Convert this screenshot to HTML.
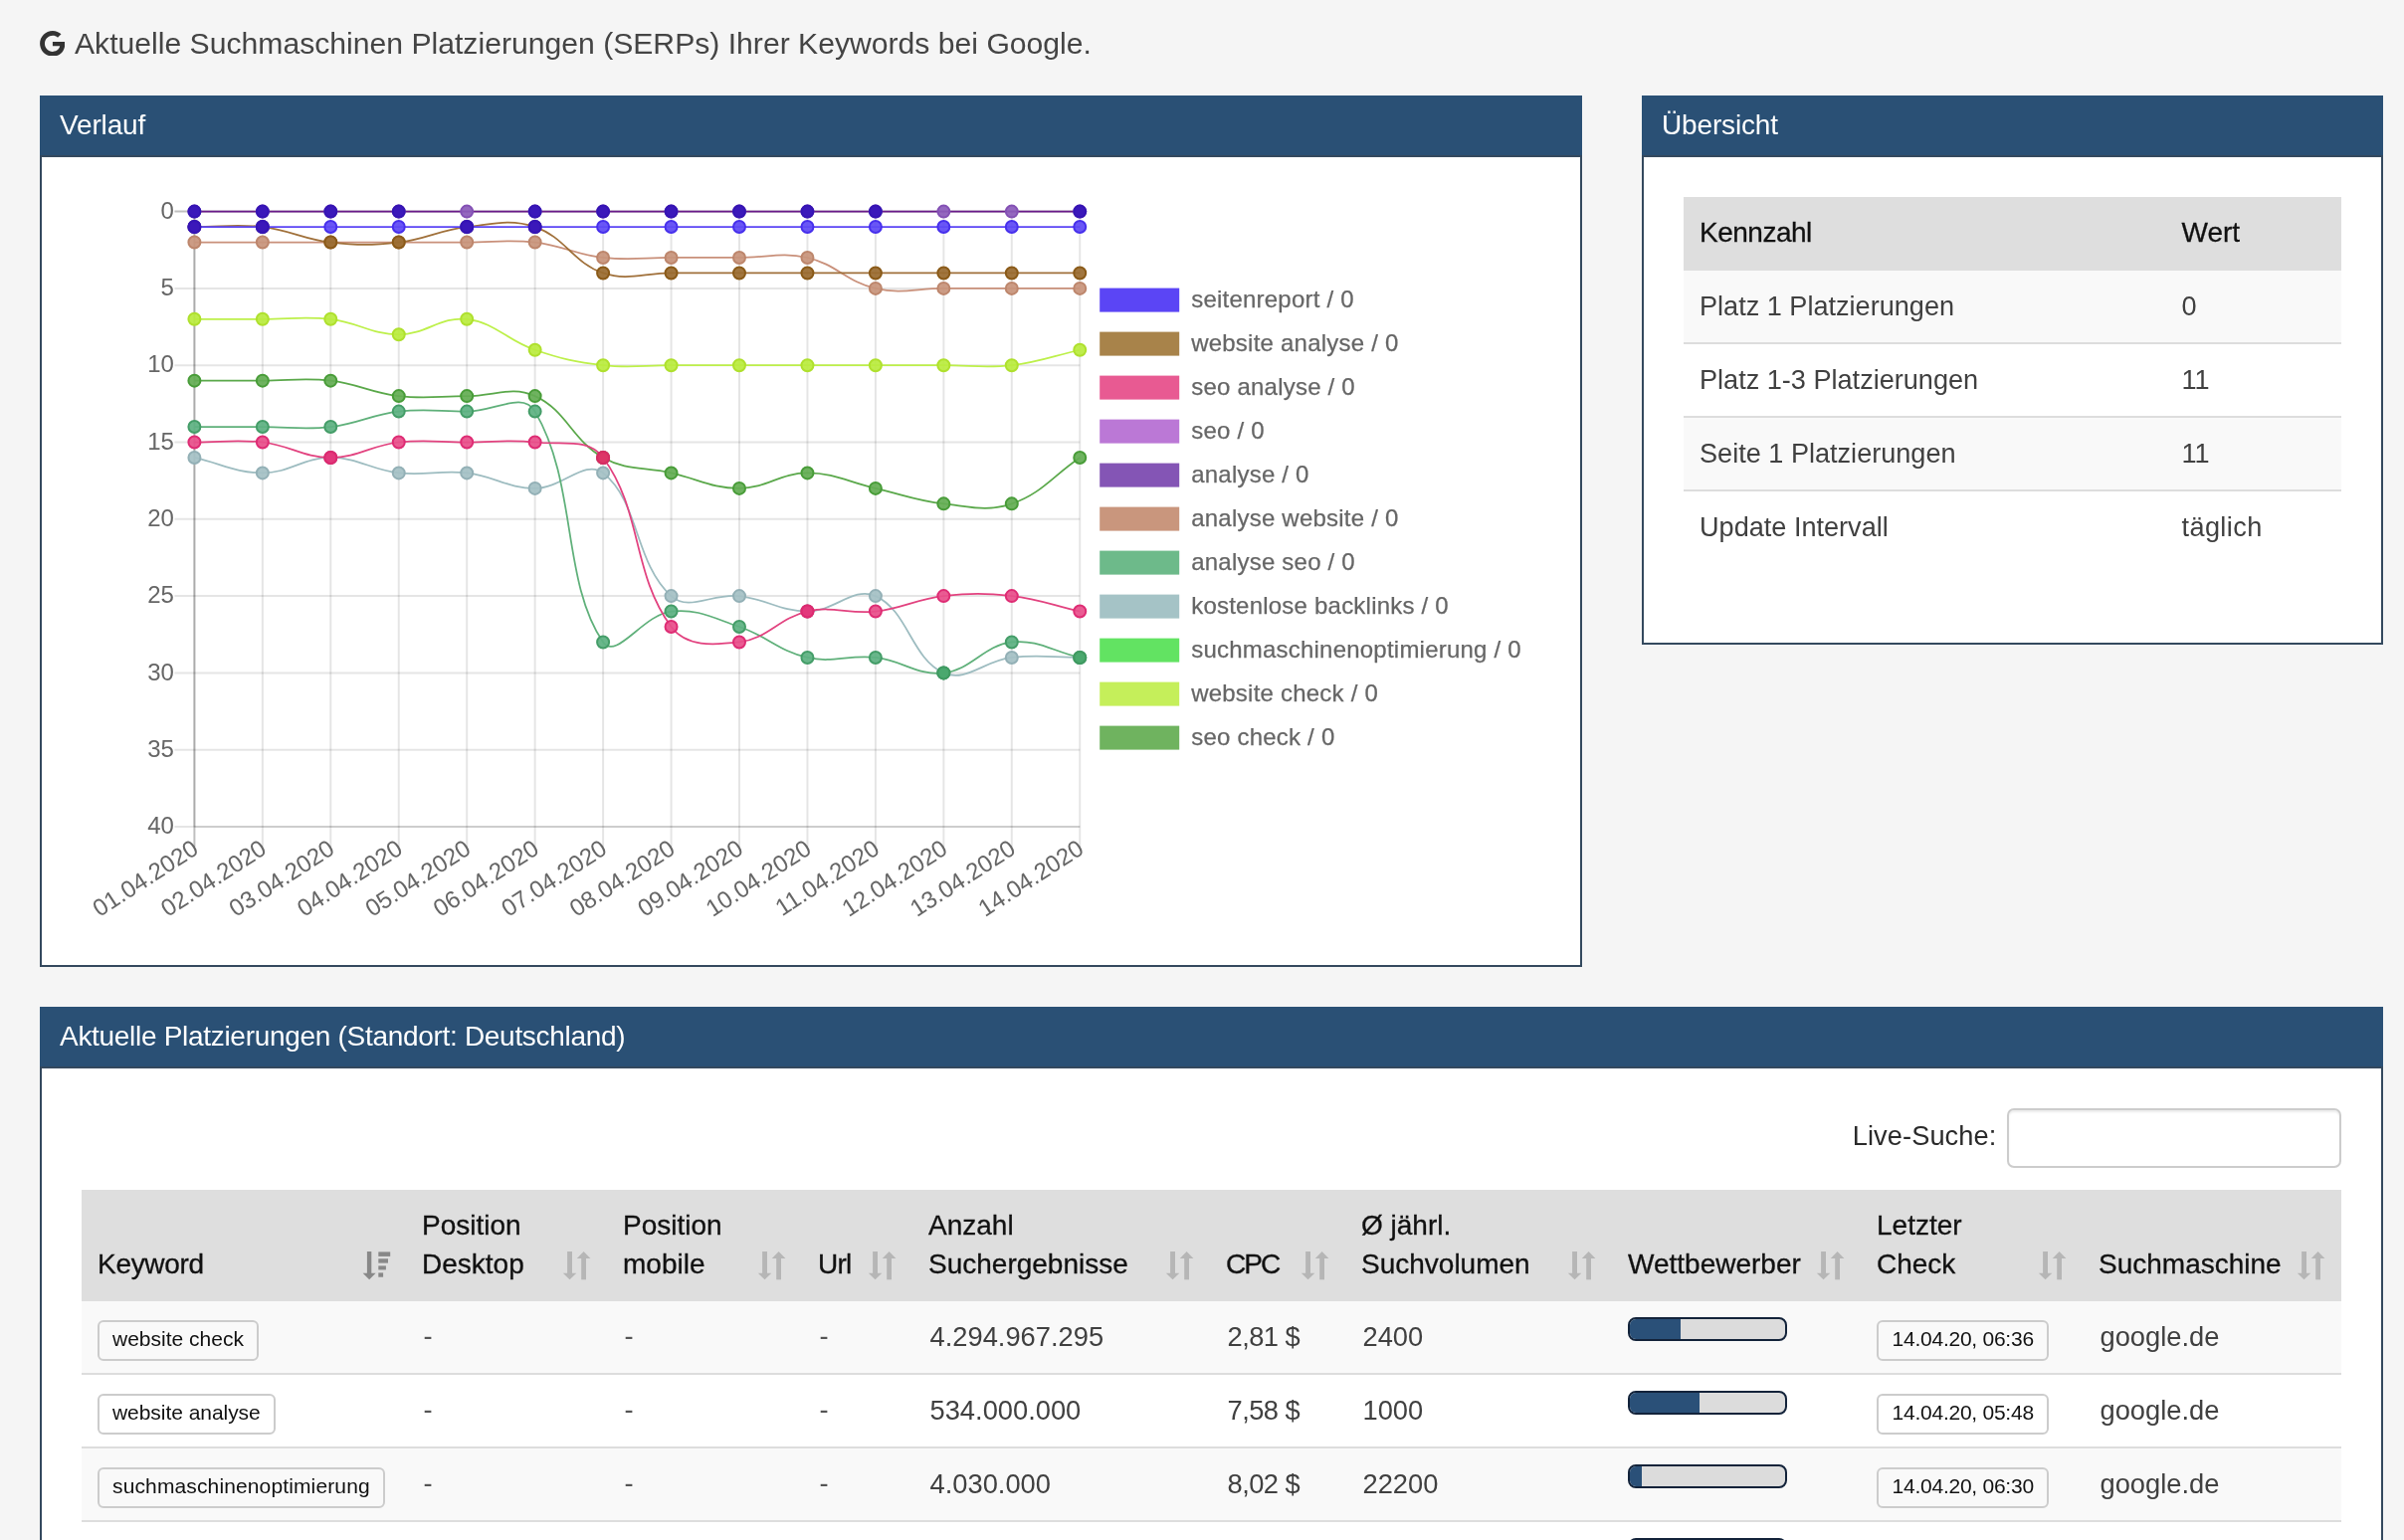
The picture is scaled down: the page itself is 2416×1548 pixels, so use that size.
<!DOCTYPE html>
<html lang="de"><head><meta charset="utf-8"><title>SERPs</title>
<style>
*{box-sizing:border-box}
html,body{margin:0;padding:0}
body{width:2416px;height:1548px;overflow:hidden;background:#f5f5f5;font-family:"Liberation Sans",Arial,sans-serif;color:#404040;position:relative;font-size:28px}
#page{position:absolute;left:0;top:0;width:2416px;height:1548px;overflow:hidden;will-change:transform}
.title{position:absolute;left:75px;top:20.7px;font-size:30.15px;line-height:46px;white-space:nowrap;color:#444}
.gicon{position:absolute;left:40px;top:30.6px;width:25.4px;height:25.6px}
.panel{position:absolute;background:#fff;border:2px solid #34495e}
.ph{position:absolute;left:-2px;right:-2px;top:-2px;height:62px;background:#2a5075;border-bottom:2px solid #34495e;color:#fff;font-size:28px;line-height:60.2px;padding-left:20px;letter-spacing:-0.15px;white-space:nowrap}
.kt{position:absolute;left:40px;top:100px;width:661px}
.kr{position:relative;height:73.9px;border-bottom:2px solid #ddd;line-height:71.4px;white-space:nowrap;font-size:27.1px}
.kr.h{background:#dedede;color:#111;border-bottom:0;height:74.4px;line-height:71.8px;font-size:28px;-webkit-text-stroke:0.3px #111}
.kr.h .a{letter-spacing:-0.5px}
.kr.odd{background:#f9f9f9}
.kr.last{border-bottom:0}
.kr span{position:absolute;top:0}
.kr .a{left:16px} .kr .b{left:500.5px}
.ls{position:absolute;right:386.6px;top:97.5px;font-size:27.2px;letter-spacing:0.1px;color:#2a2a2a;line-height:59px;white-space:nowrap}
.inp{position:absolute;left:1975.4px;top:100.3px;width:335.6px;height:59.4px;box-shadow:inset 0 2px 2px rgba(0,0,0,.075);border:2px solid #ccc;border-radius:7px;background:#fff}
.tbl{position:absolute;left:40px;top:182px;width:2271px;height:420px}
.thead{position:absolute;left:0;top:0;width:100%;height:112px;background:#dedede}
.th{position:absolute;top:0;height:112px;color:#111;-webkit-text-stroke:0.3px #111;line-height:39.2px;white-space:nowrap}
.th .ht{position:absolute;left:16px;bottom:17.5px}
.th .si{position:absolute;right:14.8px;top:62px}
.th .si.act{right:14px}
.tr{position:absolute;left:0;width:100%;height:74px;border-bottom:2px solid #ddd;background:#fff}
.tr.odd{background:#f9f9f9}
.td{position:absolute;top:0;height:72px;line-height:72px;padding-left:17.5px;white-space:nowrap;font-size:27.3px}
.badge{display:inline-block;vertical-align:top;margin-top:19.4px;margin-left:-1.5px;height:40.6px;line-height:34.2px;padding:0 13px;border:2px solid #ccc;border-radius:6px;background:transparent;color:#111;font-size:21px}
.badge.d{letter-spacing:-0.25px;padding:0 13.6px}
.prog{display:inline-block;vertical-align:top;margin-top:16px;margin-left:-2px;width:160px;height:24px;border:2px solid #13233a;border-radius:8px;background:#dcdcdc;overflow:hidden}
.td.c1,.td.c2,.td.c3{top:-1.5px;color:#555}
.td.c5{letter-spacing:-0.55px}
.bar{display:block;height:100%;background:#2a5078}
</style></head>
<body>
<div id="page">
<svg class="gicon" viewBox="0 8 488 496"><path fill="#333" d="M488 261.8C488 403.3 391.1 504 248 504 110.8 504 0 393.2 0 256S110.8 8 248 8c66.8 0 123 24.5 166.3 64.9l-67.5 64.9C258.5 52.6 94.3 116.6 94.3 256c0 86.5 69.1 156.6 153.7 156.6 98.2 0 135-70.4 140.8-106.9H248v-85.3h236.1c2.3 12.7 3.9 24.9 3.9 41.4z"/></svg>
<div class="title">Aktuelle Suchmaschinen Platzierungen (SERPs) Ihrer Keywords bei Google.</div>

<div class="panel" style="left:40px;top:96px;width:1550px;height:876px"><div class="ph">Verlauf</div></div>
<svg class="chart" width="1506" height="770" viewBox="82 198 1506 770" style="position:absolute;left:82px;top:198px">
<g><line x1="195.40" y1="212.60" x2="195.40" y2="851.00" stroke="rgba(0,0,0,0.25)" stroke-width="2"/><line x1="263.85" y1="212.60" x2="263.85" y2="851.00" stroke="rgba(0,0,0,0.1)" stroke-width="2"/><line x1="332.30" y1="212.60" x2="332.30" y2="851.00" stroke="rgba(0,0,0,0.1)" stroke-width="2"/><line x1="400.75" y1="212.60" x2="400.75" y2="851.00" stroke="rgba(0,0,0,0.1)" stroke-width="2"/><line x1="469.20" y1="212.60" x2="469.20" y2="851.00" stroke="rgba(0,0,0,0.1)" stroke-width="2"/><line x1="537.65" y1="212.60" x2="537.65" y2="851.00" stroke="rgba(0,0,0,0.1)" stroke-width="2"/><line x1="606.10" y1="212.60" x2="606.10" y2="851.00" stroke="rgba(0,0,0,0.1)" stroke-width="2"/><line x1="674.55" y1="212.60" x2="674.55" y2="851.00" stroke="rgba(0,0,0,0.1)" stroke-width="2"/><line x1="743.00" y1="212.60" x2="743.00" y2="851.00" stroke="rgba(0,0,0,0.1)" stroke-width="2"/><line x1="811.45" y1="212.60" x2="811.45" y2="851.00" stroke="rgba(0,0,0,0.1)" stroke-width="2"/><line x1="879.90" y1="212.60" x2="879.90" y2="851.00" stroke="rgba(0,0,0,0.1)" stroke-width="2"/><line x1="948.35" y1="212.60" x2="948.35" y2="851.00" stroke="rgba(0,0,0,0.1)" stroke-width="2"/><line x1="1016.80" y1="212.60" x2="1016.80" y2="851.00" stroke="rgba(0,0,0,0.1)" stroke-width="2"/><line x1="1085.25" y1="212.60" x2="1085.25" y2="851.00" stroke="rgba(0,0,0,0.1)" stroke-width="2"/><line x1="175.40" y1="212.60" x2="1085.25" y2="212.60" stroke="rgba(0,0,0,0.25)" stroke-width="2"/><line x1="175.40" y1="289.90" x2="1085.25" y2="289.90" stroke="rgba(0,0,0,0.1)" stroke-width="2"/><line x1="175.40" y1="367.20" x2="1085.25" y2="367.20" stroke="rgba(0,0,0,0.1)" stroke-width="2"/><line x1="175.40" y1="444.50" x2="1085.25" y2="444.50" stroke="rgba(0,0,0,0.1)" stroke-width="2"/><line x1="175.40" y1="521.80" x2="1085.25" y2="521.80" stroke="rgba(0,0,0,0.1)" stroke-width="2"/><line x1="175.40" y1="599.10" x2="1085.25" y2="599.10" stroke="rgba(0,0,0,0.1)" stroke-width="2"/><line x1="175.40" y1="676.40" x2="1085.25" y2="676.40" stroke="rgba(0,0,0,0.1)" stroke-width="2"/><line x1="175.40" y1="753.70" x2="1085.25" y2="753.70" stroke="rgba(0,0,0,0.1)" stroke-width="2"/><line x1="175.40" y1="831.00" x2="1085.25" y2="831.00" stroke="rgba(0,0,0,0.1)" stroke-width="2"/><line x1="195.40" y1="212.60" x2="195.40" y2="831.00" stroke="rgba(0,0,0,0.1)" stroke-width="2"/><line x1="195.40" y1="831.00" x2="1085.25" y2="831.00" stroke="rgba(0,0,0,0.1)" stroke-width="2"/></g>
<g font-family="Liberation Sans, Arial, sans-serif" font-size="24" fill="#666"><text x="174.9" y="211.3" text-anchor="end" dominant-baseline="central">0</text><text x="174.9" y="288.6" text-anchor="end" dominant-baseline="central">5</text><text x="174.9" y="365.9" text-anchor="end" dominant-baseline="central">10</text><text x="174.9" y="443.2" text-anchor="end" dominant-baseline="central">15</text><text x="174.9" y="520.5" text-anchor="end" dominant-baseline="central">20</text><text x="174.9" y="597.8" text-anchor="end" dominant-baseline="central">25</text><text x="174.9" y="675.1" text-anchor="end" dominant-baseline="central">30</text><text x="174.9" y="752.4" text-anchor="end" dominant-baseline="central">35</text><text x="174.9" y="829.7" text-anchor="end" dominant-baseline="central">40</text><text transform="translate(196.20 849.80) rotate(-33)" text-anchor="end" dominant-baseline="central">01.04.2020</text><text transform="translate(264.65 849.80) rotate(-33)" text-anchor="end" dominant-baseline="central">02.04.2020</text><text transform="translate(333.10 849.80) rotate(-33)" text-anchor="end" dominant-baseline="central">03.04.2020</text><text transform="translate(401.55 849.80) rotate(-33)" text-anchor="end" dominant-baseline="central">04.04.2020</text><text transform="translate(470.00 849.80) rotate(-33)" text-anchor="end" dominant-baseline="central">05.04.2020</text><text transform="translate(538.45 849.80) rotate(-33)" text-anchor="end" dominant-baseline="central">06.04.2020</text><text transform="translate(606.90 849.80) rotate(-33)" text-anchor="end" dominant-baseline="central">07.04.2020</text><text transform="translate(675.35 849.80) rotate(-33)" text-anchor="end" dominant-baseline="central">08.04.2020</text><text transform="translate(743.80 849.80) rotate(-33)" text-anchor="end" dominant-baseline="central">09.04.2020</text><text transform="translate(812.25 849.80) rotate(-33)" text-anchor="end" dominant-baseline="central">10.04.2020</text><text transform="translate(880.70 849.80) rotate(-33)" text-anchor="end" dominant-baseline="central">11.04.2020</text><text transform="translate(949.15 849.80) rotate(-33)" text-anchor="end" dominant-baseline="central">12.04.2020</text><text transform="translate(1017.60 849.80) rotate(-33)" text-anchor="end" dominant-baseline="central">13.04.2020</text><text transform="translate(1086.05 849.80) rotate(-33)" text-anchor="end" dominant-baseline="central">14.04.2020</text></g>
<path d="M195.40 382.66 C222.78 382.66 236.47 382.66 263.85 382.66 C291.23 382.66 305.26 379.61 332.30 382.66 C360.02 385.79 373.03 394.99 400.75 398.12 C427.79 401.17 441.82 398.12 469.20 398.12 C496.58 398.12 514.32 387.58 537.65 398.12 C569.08 412.32 575.00 442.40 606.10 459.96 C629.76 473.32 647.17 469.24 674.55 475.42 C701.93 481.60 715.62 490.88 743.00 490.88 C770.38 490.88 784.07 475.42 811.45 475.42 C838.83 475.42 852.52 484.70 879.90 490.88 C907.28 497.06 920.63 503.21 948.35 506.34 C975.39 509.39 992.00 514.74 1016.80 506.34 C1046.76 496.19 1057.87 478.51 1085.25 459.96" fill="none" stroke="#5aa84a" stroke-width="1.75"/>
<g fill="#64ad54" stroke="#489c38" stroke-width="2" fill-opacity="0.93"><circle cx="195.40" cy="382.66" r="6"/><circle cx="263.85" cy="382.66" r="6"/><circle cx="332.30" cy="382.66" r="6"/><circle cx="400.75" cy="398.12" r="6"/><circle cx="469.20" cy="398.12" r="6"/><circle cx="537.65" cy="398.12" r="6"/><circle cx="606.10" cy="459.96" r="6"/><circle cx="674.55" cy="475.42" r="6"/><circle cx="743.00" cy="490.88" r="6"/><circle cx="811.45" cy="475.42" r="6"/><circle cx="879.90" cy="490.88" r="6"/><circle cx="948.35" cy="506.34" r="6"/><circle cx="1016.80" cy="506.34" r="6"/><circle cx="1085.25" cy="459.96" r="6"/></g>
<path d="M195.40 320.82 C222.78 320.82 236.47 320.82 263.85 320.82 C291.23 320.82 305.26 317.77 332.30 320.82 C360.02 323.95 373.37 336.28 400.75 336.28 C428.13 336.28 442.75 317.83 469.20 320.82 C497.51 324.02 509.34 342.15 537.65 351.74 C564.10 360.70 578.38 364.07 606.10 367.20 C633.14 370.25 647.17 367.20 674.55 367.20 C701.93 367.20 715.62 367.20 743.00 367.20 C770.38 367.20 784.07 367.20 811.45 367.20 C838.83 367.20 852.52 367.20 879.90 367.20 C907.28 367.20 920.97 367.20 948.35 367.20 C975.73 367.20 989.76 370.25 1016.80 367.20 C1044.52 364.07 1057.87 357.92 1085.25 351.74" fill="none" stroke="#bdf04a" stroke-width="1.75"/>
<g fill="#baec40" stroke="#afe02e" stroke-width="2" fill-opacity="0.93"><circle cx="195.40" cy="320.82" r="6"/><circle cx="263.85" cy="320.82" r="6"/><circle cx="332.30" cy="320.82" r="6"/><circle cx="400.75" cy="336.28" r="6"/><circle cx="469.20" cy="320.82" r="6"/><circle cx="537.65" cy="351.74" r="6"/><circle cx="606.10" cy="367.20" r="6"/><circle cx="674.55" cy="367.20" r="6"/><circle cx="743.00" cy="367.20" r="6"/><circle cx="811.45" cy="367.20" r="6"/><circle cx="879.90" cy="367.20" r="6"/><circle cx="948.35" cy="367.20" r="6"/><circle cx="1016.80" cy="367.20" r="6"/><circle cx="1085.25" cy="351.74" r="6"/></g>
<path d="M195.40 459.96 C222.78 466.14 236.47 475.42 263.85 475.42 C291.23 475.42 304.92 459.96 332.30 459.96 C359.68 459.96 373.03 472.29 400.75 475.42 C427.79 478.47 442.16 472.37 469.20 475.42 C496.92 478.55 510.27 490.88 537.65 490.88 C565.03 490.88 587.93 461.06 606.10 475.42 C642.69 504.35 637.66 565.77 674.55 599.10 C692.42 615.24 715.96 596.05 743.00 599.10 C770.72 602.23 784.07 614.56 811.45 614.56 C838.83 614.56 857.74 589.09 879.90 599.10 C912.50 613.83 915.75 661.67 948.35 676.40 C970.51 686.41 989.08 664.07 1016.80 660.94 C1043.84 657.89 1057.87 660.94 1085.25 660.94" fill="none" stroke="#9dbcc0" stroke-width="1.75"/>
<g fill="#a5c1c5" stroke="#93b0b6" stroke-width="2" fill-opacity="0.93"><circle cx="195.40" cy="459.96" r="6"/><circle cx="263.85" cy="475.42" r="6"/><circle cx="332.30" cy="459.96" r="6"/><circle cx="400.75" cy="475.42" r="6"/><circle cx="469.20" cy="475.42" r="6"/><circle cx="537.65" cy="490.88" r="6"/><circle cx="606.10" cy="475.42" r="6"/><circle cx="674.55" cy="599.10" r="6"/><circle cx="743.00" cy="599.10" r="6"/><circle cx="811.45" cy="614.56" r="6"/><circle cx="879.90" cy="599.10" r="6"/><circle cx="948.35" cy="676.40" r="6"/><circle cx="1016.80" cy="660.94" r="6"/><circle cx="1085.25" cy="660.94" r="6"/></g>
<path d="M195.40 429.04 C222.78 429.04 236.47 429.04 263.85 429.04 C291.23 429.04 305.26 432.09 332.30 429.04 C360.02 425.91 373.03 416.71 400.75 413.58 C427.79 410.53 441.82 413.58 469.20 413.58 C496.58 413.58 525.57 393.11 537.65 413.58 C580.33 485.87 564.32 584.14 606.10 645.48 C619.08 664.53 646.24 617.76 674.55 614.56 C701.00 611.57 716.55 621.06 743.00 630.02 C771.31 639.61 782.80 654.47 811.45 660.94 C837.56 666.84 852.86 657.89 879.90 660.94 C907.62 664.07 921.90 679.39 948.35 676.40 C976.66 673.20 988.49 648.68 1016.80 645.48 C1043.25 642.49 1057.87 654.76 1085.25 660.94" fill="none" stroke="#5fb07a" stroke-width="1.75"/>
<g fill="#5eb182" stroke="#449d68" stroke-width="2" fill-opacity="0.93"><circle cx="195.40" cy="429.04" r="6"/><circle cx="263.85" cy="429.04" r="6"/><circle cx="332.30" cy="429.04" r="6"/><circle cx="400.75" cy="413.58" r="6"/><circle cx="469.20" cy="413.58" r="6"/><circle cx="537.65" cy="413.58" r="6"/><circle cx="606.10" cy="645.48" r="6"/><circle cx="674.55" cy="614.56" r="6"/><circle cx="743.00" cy="630.02" r="6"/><circle cx="811.45" cy="660.94" r="6"/><circle cx="879.90" cy="660.94" r="6"/><circle cx="948.35" cy="676.40" r="6"/><circle cx="1016.80" cy="645.48" r="6"/><circle cx="1085.25" cy="660.94" r="6"/></g>
<path d="M195.40 243.52 C222.78 243.52 236.47 243.52 263.85 243.52 C291.23 243.52 304.92 243.52 332.30 243.52 C359.68 243.52 373.37 243.52 400.75 243.52 C428.13 243.52 441.82 243.52 469.20 243.52 C496.58 243.52 510.61 240.47 537.65 243.52 C565.37 246.65 578.38 255.85 606.10 258.98 C633.14 262.03 647.17 258.98 674.55 258.98 C701.93 258.98 715.62 258.98 743.00 258.98 C770.38 258.98 785.34 253.08 811.45 258.98 C840.10 265.45 851.25 283.43 879.90 289.90 C906.01 295.80 920.97 289.90 948.35 289.90 C975.73 289.90 989.42 289.90 1016.80 289.90 C1044.18 289.90 1057.87 289.90 1085.25 289.90" fill="none" stroke="#c9907a" stroke-width="1.75"/>
<g fill="#c8957c" stroke="#bd866c" stroke-width="2" fill-opacity="0.93"><circle cx="195.40" cy="243.52" r="6"/><circle cx="263.85" cy="243.52" r="6"/><circle cx="332.30" cy="243.52" r="6"/><circle cx="400.75" cy="243.52" r="6"/><circle cx="469.20" cy="243.52" r="6"/><circle cx="537.65" cy="243.52" r="6"/><circle cx="606.10" cy="258.98" r="6"/><circle cx="674.55" cy="258.98" r="6"/><circle cx="743.00" cy="258.98" r="6"/><circle cx="811.45" cy="258.98" r="6"/><circle cx="879.90" cy="289.90" r="6"/><circle cx="948.35" cy="289.90" r="6"/><circle cx="1016.80" cy="289.90" r="6"/><circle cx="1085.25" cy="289.90" r="6"/></g>
<path d="M195.40 212.60 C222.78 212.60 236.47 212.60 263.85 212.60 C291.23 212.60 304.92 212.60 332.30 212.60 C359.68 212.60 373.37 212.60 400.75 212.60 C428.13 212.60 441.82 212.60 469.20 212.60 C496.58 212.60 510.27 212.60 537.65 212.60 C565.03 212.60 578.72 212.60 606.10 212.60 C633.48 212.60 647.17 212.60 674.55 212.60 C701.93 212.60 715.62 212.60 743.00 212.60 C770.38 212.60 784.07 212.60 811.45 212.60 C838.83 212.60 852.52 212.60 879.90 212.60 C907.28 212.60 920.97 212.60 948.35 212.60 C975.73 212.60 989.42 212.60 1016.80 212.60 C1044.18 212.60 1057.87 212.60 1085.25 212.60" fill="none" stroke="#6a1b8a" stroke-width="1.75"/>
<g fill="#8c5cba" stroke="#8350b4" stroke-width="2" fill-opacity="0.93"><circle cx="195.40" cy="212.60" r="6"/><circle cx="263.85" cy="212.60" r="6"/><circle cx="332.30" cy="212.60" r="6"/><circle cx="400.75" cy="212.60" r="6"/><circle cx="469.20" cy="212.60" r="6"/><circle cx="537.65" cy="212.60" r="6"/><circle cx="606.10" cy="212.60" r="6"/><circle cx="674.55" cy="212.60" r="6"/><circle cx="743.00" cy="212.60" r="6"/><circle cx="811.45" cy="212.60" r="6"/><circle cx="879.90" cy="212.60" r="6"/><circle cx="948.35" cy="212.60" r="6"/><circle cx="1016.80" cy="212.60" r="6"/><circle cx="1085.25" cy="212.60" r="6"/></g>
<path d="M195.40 444.50 C222.78 444.50 236.81 441.45 263.85 444.50 C291.57 447.63 304.92 459.96 332.30 459.96 C359.68 459.96 373.03 447.63 400.75 444.50 C427.79 441.45 441.82 444.50 469.20 444.50 C496.58 444.50 510.61 441.45 537.65 444.50 C565.37 447.63 590.94 439.42 606.10 459.96 C645.70 513.63 634.95 576.35 674.55 630.02 C689.71 650.56 716.55 648.47 743.00 645.48 C771.31 642.28 782.80 621.03 811.45 614.56 C837.56 608.66 852.86 617.61 879.90 614.56 C907.62 611.43 920.63 602.23 948.35 599.10 C975.39 596.05 989.76 596.05 1016.80 599.10 C1044.52 602.23 1057.87 608.38 1085.25 614.56" fill="none" stroke="#e2427f" stroke-width="1.75"/>
<g fill="#e8508b" stroke="#de2c74" stroke-width="2" fill-opacity="0.93"><circle cx="195.40" cy="444.50" r="6"/><circle cx="263.85" cy="444.50" r="6"/><circle cx="332.30" cy="459.96" r="6"/><circle cx="400.75" cy="444.50" r="6"/><circle cx="469.20" cy="444.50" r="6"/><circle cx="537.65" cy="444.50" r="6"/><circle cx="606.10" cy="459.96" r="6"/><circle cx="674.55" cy="630.02" r="6"/><circle cx="743.00" cy="645.48" r="6"/><circle cx="811.45" cy="614.56" r="6"/><circle cx="879.90" cy="614.56" r="6"/><circle cx="948.35" cy="599.10" r="6"/><circle cx="1016.80" cy="599.10" r="6"/><circle cx="1085.25" cy="614.56" r="6"/></g>
<path d="M195.40 228.06 C222.78 228.06 236.81 225.01 263.85 228.06 C291.57 231.19 304.58 240.39 332.30 243.52 C359.34 246.57 373.71 246.57 400.75 243.52 C428.47 240.39 441.48 231.19 469.20 228.06 C496.24 225.01 512.85 219.66 537.65 228.06 C567.61 238.21 576.14 264.29 606.10 274.44 C630.90 282.84 647.17 274.44 674.55 274.44 C701.93 274.44 715.62 274.44 743.00 274.44 C770.38 274.44 784.07 274.44 811.45 274.44 C838.83 274.44 852.52 274.44 879.90 274.44 C907.28 274.44 920.97 274.44 948.35 274.44 C975.73 274.44 989.42 274.44 1016.80 274.44 C1044.18 274.44 1057.87 274.44 1085.25 274.44" fill="none" stroke="#a0703a" stroke-width="1.75"/>
<g fill="#9a6c30" stroke="#8a5a18" stroke-width="2" fill-opacity="0.93"><circle cx="195.40" cy="228.06" r="6"/><circle cx="263.85" cy="228.06" r="6"/><circle cx="332.30" cy="243.52" r="6"/><circle cx="400.75" cy="243.52" r="6"/><circle cx="469.20" cy="228.06" r="6"/><circle cx="537.65" cy="228.06" r="6"/><circle cx="606.10" cy="274.44" r="6"/><circle cx="674.55" cy="274.44" r="6"/><circle cx="743.00" cy="274.44" r="6"/><circle cx="811.45" cy="274.44" r="6"/><circle cx="879.90" cy="274.44" r="6"/><circle cx="948.35" cy="274.44" r="6"/><circle cx="1016.80" cy="274.44" r="6"/><circle cx="1085.25" cy="274.44" r="6"/></g>
<path d="M195.40 228.06 C222.78 228.06 236.47 228.06 263.85 228.06 C291.23 228.06 304.92 228.06 332.30 228.06 C359.68 228.06 373.37 228.06 400.75 228.06 C428.13 228.06 441.82 228.06 469.20 228.06 C496.58 228.06 510.27 228.06 537.65 228.06 C565.03 228.06 578.72 228.06 606.10 228.06 C633.48 228.06 647.17 228.06 674.55 228.06 C701.93 228.06 715.62 228.06 743.00 228.06 C770.38 228.06 784.07 228.06 811.45 228.06 C838.83 228.06 852.52 228.06 879.90 228.06 C907.28 228.06 920.97 228.06 948.35 228.06 C975.73 228.06 989.42 228.06 1016.80 228.06 C1044.18 228.06 1057.87 228.06 1085.25 228.06" fill="none" stroke="#5b45f5" stroke-width="1.75"/>
<g fill="#5f4af5" stroke="#4730ec" stroke-width="2" fill-opacity="0.93"><circle cx="195.40" cy="228.06" r="6"/><circle cx="263.85" cy="228.06" r="6"/><circle cx="332.30" cy="228.06" r="6"/><circle cx="400.75" cy="228.06" r="6"/><circle cx="469.20" cy="228.06" r="6"/><circle cx="537.65" cy="228.06" r="6"/><circle cx="606.10" cy="228.06" r="6"/><circle cx="674.55" cy="228.06" r="6"/><circle cx="743.00" cy="228.06" r="6"/><circle cx="811.45" cy="228.06" r="6"/><circle cx="879.90" cy="228.06" r="6"/><circle cx="948.35" cy="228.06" r="6"/><circle cx="1016.80" cy="228.06" r="6"/><circle cx="1085.25" cy="228.06" r="6"/></g>
<g fill="#3b18ba" stroke="#3514b4" stroke-width="2"><circle cx="195.40" cy="212.60" r="6"/><circle cx="263.85" cy="212.60" r="6"/><circle cx="332.30" cy="212.60" r="6"/><circle cx="400.75" cy="212.60" r="6"/><circle cx="537.65" cy="212.60" r="6"/><circle cx="606.10" cy="212.60" r="6"/><circle cx="674.55" cy="212.60" r="6"/><circle cx="743.00" cy="212.60" r="6"/><circle cx="811.45" cy="212.60" r="6"/><circle cx="879.90" cy="212.60" r="6"/><circle cx="1085.25" cy="212.60" r="6"/><circle cx="195.40" cy="228.06" r="6"/><circle cx="263.85" cy="228.06" r="6"/><circle cx="469.20" cy="228.06" r="6"/><circle cx="537.65" cy="228.06" r="6"/></g>
<g stroke-width="2"><circle cx="332.30" cy="459.96" r="6" fill="#e2387c" stroke="#dc2a70"/><circle cx="811.45" cy="614.56" r="6" fill="#e2387c" stroke="#dc2a70"/><circle cx="606.10" cy="459.96" r="6" fill="#dd3668" stroke="#d62c62"/><circle cx="948.35" cy="676.40" r="6" fill="#4aa86e" stroke="#3f9a60"/><circle cx="1085.25" cy="660.94" r="6" fill="#4aa86e" stroke="#3f9a60"/></g>
<g><rect x="1105.2" y="289.6" width="80" height="24" fill="#5b45f5"/><rect x="1105.2" y="333.6" width="80" height="24" fill="#a8834a"/><rect x="1105.2" y="377.6" width="80" height="24" fill="#e85a92"/><rect x="1105.2" y="421.6" width="80" height="24" fill="#bb78d6"/><rect x="1105.2" y="465.6" width="80" height="24" fill="#8455b5"/><rect x="1105.2" y="509.6" width="80" height="24" fill="#c9967d"/><rect x="1105.2" y="553.6" width="80" height="24" fill="#6dba8a"/><rect x="1105.2" y="597.6" width="80" height="24" fill="#a5c3c6"/><rect x="1105.2" y="641.6" width="80" height="24" fill="#62e362"/><rect x="1105.2" y="685.6" width="80" height="24" fill="#c5ef5a"/><rect x="1105.2" y="729.6" width="80" height="24" fill="#6fb35f"/></g>
<g font-family="Liberation Sans, Arial, sans-serif" font-size="24" fill="#666" stroke="#666" stroke-width="0.25" letter-spacing="0.22"><text x="1197.2" y="309.3">seitenreport / 0</text><text x="1197.2" y="353.3">website analyse / 0</text><text x="1197.2" y="397.3">seo analyse / 0</text><text x="1197.2" y="441.3">seo / 0</text><text x="1197.2" y="485.3">analyse / 0</text><text x="1197.2" y="529.3">analyse website / 0</text><text x="1197.2" y="573.3">analyse seo / 0</text><text x="1197.2" y="617.3">kostenlose backlinks / 0</text><text x="1197.2" y="661.3">suchmaschinenoptimierung / 0</text><text x="1197.2" y="705.3">website check / 0</text><text x="1197.2" y="749.3">seo check / 0</text></g>
</svg>

<div class="panel" style="left:1650px;top:96px;width:745px;height:552px"><div class="ph">Übersicht</div>
<div class="kt">
<div class="kr h"><span class="a">Kennzahl</span><span class="b">Wert</span></div>
<div class="kr odd"><span class="a">Platz 1 Platzierungen</span><span class="b">0</span></div>
<div class="kr"><span class="a">Platz 1-3 Platzierungen</span><span class="b">11</span></div>
<div class="kr odd"><span class="a">Seite 1 Platzierungen</span><span class="b">11</span></div>
<div class="kr last"><span class="a">Update Intervall</span><span class="b" style="letter-spacing:.4px">täglich</span></div>
</div>
</div>

<div class="panel" style="left:40px;top:1012px;width:2355px;height:700px"><div class="ph" style="letter-spacing:-0.3px">Aktuelle Platzierungen (Standort: Deutschland)</div>
<div class="ls">Live-Suche:</div><div class="inp"></div>
<div class="tbl"><div class="thead"><div class="th" style="left:0px;width:326px"><span class="ht"><span style="letter-spacing:-0.3px">Keyword</span></span><svg class="si act" width="30" height="30" viewBox="0 0 30 30"><g fill="#888"><rect x="4.9" y="0" width="4.4" height="23"/><path d="M0.6 21.7h13l-6.5 6.6z"/><rect x="16.3" y="0.4" width="11.9" height="4.5"/><rect x="16.3" y="7.3" width="9.7" height="4.3"/><rect x="16.3" y="14.4" width="7.6" height="4"/><rect x="16.3" y="21.4" width="4.8" height="4.3"/></g></svg></div><div class="th" style="left:326px;width:202px"><span class="ht">Position<br>Desktop</span><svg class="si" width="30" height="30" viewBox="0 0 30 30"><g fill="#b6b6b6"><rect x="5.1" y="0" width="4.9" height="23"/><path d="M0.8 21.7h13.5l-6.75 6.6z"/><rect x="19.2" y="6" width="4.8" height="22.3"/><path d="M14.8 7h13.6l-6.8 -7z"/></g></svg></div><div class="th" style="left:528px;width:196px"><span class="ht">Position<br>mobile</span><svg class="si" width="30" height="30" viewBox="0 0 30 30"><g fill="#b6b6b6"><rect x="5.1" y="0" width="4.9" height="23"/><path d="M0.8 21.7h13.5l-6.75 6.6z"/><rect x="19.2" y="6" width="4.8" height="22.3"/><path d="M14.8 7h13.6l-6.8 -7z"/></g></svg></div><div class="th" style="left:724px;width:111px"><span class="ht"><span style="letter-spacing:-0.8px">Url</span></span><svg class="si" width="30" height="30" viewBox="0 0 30 30"><g fill="#b6b6b6"><rect x="5.1" y="0" width="4.9" height="23"/><path d="M0.8 21.7h13.5l-6.75 6.6z"/><rect x="19.2" y="6" width="4.8" height="22.3"/><path d="M14.8 7h13.6l-6.8 -7z"/></g></svg></div><div class="th" style="left:835px;width:299px"><span class="ht">Anzahl<br>Suchergebnisse</span><svg class="si" width="30" height="30" viewBox="0 0 30 30"><g fill="#b6b6b6"><rect x="5.1" y="0" width="4.9" height="23"/><path d="M0.8 21.7h13.5l-6.75 6.6z"/><rect x="19.2" y="6" width="4.8" height="22.3"/><path d="M14.8 7h13.6l-6.8 -7z"/></g></svg></div><div class="th" style="left:1134px;width:136px"><span class="ht"><span style="letter-spacing:-2px">CPC</span></span><svg class="si" width="30" height="30" viewBox="0 0 30 30"><g fill="#b6b6b6"><rect x="5.1" y="0" width="4.9" height="23"/><path d="M0.8 21.7h13.5l-6.75 6.6z"/><rect x="19.2" y="6" width="4.8" height="22.3"/><path d="M14.8 7h13.6l-6.8 -7z"/></g></svg></div><div class="th" style="left:1270px;width:268px"><span class="ht">Ø jährl.<br>Suchvolumen</span><svg class="si" width="30" height="30" viewBox="0 0 30 30"><g fill="#b6b6b6"><rect x="5.1" y="0" width="4.9" height="23"/><path d="M0.8 21.7h13.5l-6.75 6.6z"/><rect x="19.2" y="6" width="4.8" height="22.3"/><path d="M14.8 7h13.6l-6.8 -7z"/></g></svg></div><div class="th" style="left:1538px;width:250px"><span class="ht">Wettbewerber</span><svg class="si" width="30" height="30" viewBox="0 0 30 30"><g fill="#b6b6b6"><rect x="5.1" y="0" width="4.9" height="23"/><path d="M0.8 21.7h13.5l-6.75 6.6z"/><rect x="19.2" y="6" width="4.8" height="22.3"/><path d="M14.8 7h13.6l-6.8 -7z"/></g></svg></div><div class="th" style="left:1788px;width:223px"><span class="ht">Letzter<br>Check</span><svg class="si" width="30" height="30" viewBox="0 0 30 30"><g fill="#b6b6b6"><rect x="5.1" y="0" width="4.9" height="23"/><path d="M0.8 21.7h13.5l-6.75 6.6z"/><rect x="19.2" y="6" width="4.8" height="22.3"/><path d="M14.8 7h13.6l-6.8 -7z"/></g></svg></div><div class="th" style="left:2011px;width:260px"><span class="ht">Suchmaschine</span><svg class="si" width="30" height="30" viewBox="0 0 30 30"><g fill="#b6b6b6"><rect x="5.1" y="0" width="4.9" height="23"/><path d="M0.8 21.7h13.5l-6.75 6.6z"/><rect x="19.2" y="6" width="4.8" height="22.3"/><path d="M14.8 7h13.6l-6.8 -7z"/></g></svg></div></div><div class="tr odd" style="top:112px"><div class="td c0" style="left:0px;width:326px"><span class="badge" style="letter-spacing:0">website check</span></div><div class="td c1" style="left:326px;width:202px">-</div><div class="td c2" style="left:528px;width:196px">-</div><div class="td c3" style="left:724px;width:111px">-</div><div class="td c4" style="left:835px;width:299px">4.294.967.295</div><div class="td c5" style="left:1134px;width:136px">2,81 $</div><div class="td c6" style="left:1270px;width:268px">2400</div><div class="td c7" style="left:1538px;width:250px"><span class="prog"><span class="bar" style="width:33%"></span></span></div><div class="td c8" style="left:1788px;width:223px"><span class="badge d">14.04.20, 06:36</span></div><div class="td c9" style="left:2011px;width:260px">google.de</div></div><div class="tr" style="top:186px"><div class="td c0" style="left:0px;width:326px"><span class="badge" style="letter-spacing:-0.05px">website analyse</span></div><div class="td c1" style="left:326px;width:202px">-</div><div class="td c2" style="left:528px;width:196px">-</div><div class="td c3" style="left:724px;width:111px">-</div><div class="td c4" style="left:835px;width:299px">534.000.000</div><div class="td c5" style="left:1134px;width:136px">7,58 $</div><div class="td c6" style="left:1270px;width:268px">1000</div><div class="td c7" style="left:1538px;width:250px"><span class="prog"><span class="bar" style="width:45%"></span></span></div><div class="td c8" style="left:1788px;width:223px"><span class="badge d">14.04.20, 05:48</span></div><div class="td c9" style="left:2011px;width:260px">google.de</div></div><div class="tr odd" style="top:260px"><div class="td c0" style="left:0px;width:326px"><span class="badge" style="letter-spacing:0.13px">suchmaschinenoptimierung</span></div><div class="td c1" style="left:326px;width:202px">-</div><div class="td c2" style="left:528px;width:196px">-</div><div class="td c3" style="left:724px;width:111px">-</div><div class="td c4" style="left:835px;width:299px">4.030.000</div><div class="td c5" style="left:1134px;width:136px">8,02 $</div><div class="td c6" style="left:1270px;width:268px">22200</div><div class="td c7" style="left:1538px;width:250px"><span class="prog"><span class="bar" style="width:8%"></span></span></div><div class="td c8" style="left:1788px;width:223px"><span class="badge d">14.04.20, 06:30</span></div><div class="td c9" style="left:2011px;width:260px">google.de</div></div><div class="tr" style="top:334px"><div class="td c0" style="left:0px;width:326px"><span class="badge" style="letter-spacing:0">seo check</span></div><div class="td c1" style="left:326px;width:202px">-</div><div class="td c2" style="left:528px;width:196px">-</div><div class="td c3" style="left:724px;width:111px">-</div><div class="td c4" style="left:835px;width:299px">1.230.000.000</div><div class="td c5" style="left:1134px;width:136px">3,10 $</div><div class="td c6" style="left:1270px;width:268px">880</div><div class="td c7" style="left:1538px;width:250px"><span class="prog"><span class="bar" style="width:40%"></span></span></div><div class="td c8" style="left:1788px;width:223px"><span class="badge d">14.04.20, 06:12</span></div><div class="td c9" style="left:2011px;width:260px">google.de</div></div></div>
</div>
</div>
</body></html>
